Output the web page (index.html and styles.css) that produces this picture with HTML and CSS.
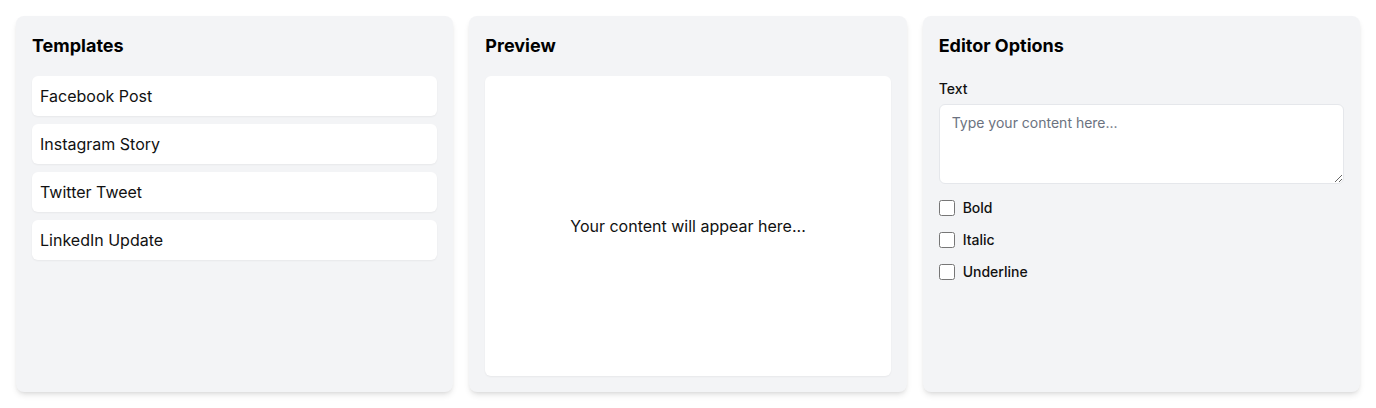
FILE: index.html
```html
<!DOCTYPE html>
<html lang="en">
<head>
<meta charset="utf-8">
<title>Editor</title>
<link rel="stylesheet" href="styles.css">
</head>
<body>
<div class="layout">
  <section class="panel">
    <h2 class="panel-title">Templates</h2>
    <ul class="template-list">
      <li class="template-item">Facebook Post</li>
      <li class="template-item">Instagram Story</li>
      <li class="template-item">Twitter Tweet</li>
      <li class="template-item">LinkedIn Update</li>
    </ul>
  </section>
  <section class="panel">
    <h2 class="panel-title">Preview</h2>
    <div class="preview-box">
      <p class="preview-text">Your content will appear here...</p>
    </div>
  </section>
  <section class="panel">
    <h2 class="panel-title">Editor Options</h2>
    <label class="field-label" for="content">Text</label>
    <textarea id="content" class="text-input" placeholder="Type your content here..."></textarea>
    <div class="options">
      <label class="option"><input type="checkbox" class="option-check"><span>Bold</span></label>
      <label class="option"><input type="checkbox" class="option-check"><span>Italic</span></label>
      <label class="option"><input type="checkbox" class="option-check"><span>Underline</span></label>
    </div>
  </section>
</div>
</body>
</html>
```

FILE: styles.css
```css
* { box-sizing: border-box; }
html, body { margin: 0; padding: 0; }
body {
  font-family: Inter, "Noto Sans", sans-serif;
  color: #111;
  background: #fff;
}
.layout {
  display: grid;
  grid-template-columns: repeat(3, 1fr);
  gap: 16px;
  padding: 16px;
  height: 408px;
}
.panel {
  background: #f3f4f6;
  border-radius: 8px;
  padding: 16px;
  display: flex;
  flex-direction: column;
  box-shadow: 0 4px 6px -1px rgba(0,0,0,0.1), 0 2px 4px -2px rgba(0,0,0,0.1);
}
.panel-title {
  margin: 0 0 16px;
  font-size: 18px;
  line-height: 28px;
  font-weight: 700;
  color: #000;
}
.template-list {
  list-style: none;
  margin: 0;
  padding: 0;
  display: flex;
  flex-direction: column;
  gap: 8px;
}
.template-item {
  background: #fff;
  border-radius: 6px;
  padding: 8px;
  font-size: 16px;
  line-height: 24px;
  box-shadow: 0 1px 2px 0 rgba(0,0,0,0.05);
}
.preview-box {
  flex: 1;
  background: #fff;
  border-radius: 6px;
  display: flex;
  align-items: center;
  justify-content: center;
  box-shadow: 0 1px 2px 0 rgba(0,0,0,0.05);
}
.preview-text {
  margin: 0;
  font-size: 16px;
  line-height: 24px;
}
.field-label {
  display: block;
  font-size: 14px;
  line-height: 20px;
  font-weight: 500;
  margin-top: 3px;
  margin-bottom: 5px;
}
.text-input {
  display: block;
  width: 100%;
  height: 80px;
  padding: 8px 12px;
  border: 1px solid #e5e7eb;
  border-radius: 6px;
  font-family: inherit;
  font-size: 14px;
  line-height: 20px;
  color: #111;
  background: #fff;
  resize: vertical;
}
.text-input::placeholder { color: #6b7280; }
.options {
  margin-top: 14px;
  display: flex;
  flex-direction: column;
  gap: 12px;
}
.option {
  display: flex;
  align-items: center;
  gap: 8px;
  font-size: 14px;
  line-height: 20px;
  font-weight: 500;
}
.option-check {
  width: 16px;
  height: 16px;
  margin: 0;
}
```
